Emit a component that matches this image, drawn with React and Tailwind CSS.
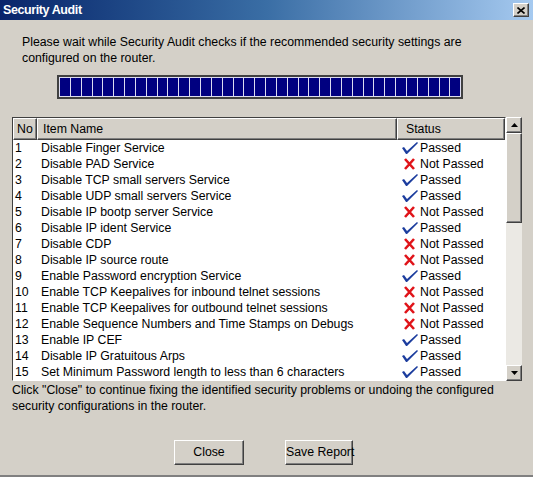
import React from 'react'

const rows = [
  ['Disable Finger Service', true],
  ['Disable PAD Service', false],
  ['Disable TCP small servers Service', true],
  ['Disable UDP small servers Service', true],
  ['Disable IP bootp server Service', false],
  ['Disable IP ident Service', true],
  ['Disable CDP', false],
  ['Disable IP source route', false],
  ['Enable Password encryption Service', true],
  ['Enable TCP Keepalives for inbound telnet sessions', false],
  ['Enable TCP Keepalives for outbound telnet sessions', false],
  ['Enable Sequence Numbers and Time Stamps on Debugs', false],
  ['Enable IP CEF', true],
  ['Disable IP Gratuitous Arps', true],
  ['Set Minimum Password length to less than 6 characters', true],
]

function Check() {
  return (
    <svg width="18" height="14" viewBox="0 0 18 14">
      <path d="M1 7 L3 6 L6 10 L16 1 L17 2 L6 13 L5 13 Z" fill="#1c3d9e" />
    </svg>
  )
}

function Cross() {
  return (
    <svg width="18" height="14" viewBox="0 0 18 14">
      <path d="M4 2 L13 12 M13 2 L4 12" stroke="#e0141a" strokeWidth="2.6" />
    </svg>
  )
}

const raised = 'border border-t-white border-l-white border-r-[#404040] border-b-[#404040] shadow-[inset_-1px_-1px_0_#808080]'

export default function App() {
  const segs = Array.from({ length: 37 })
  return (
    <div className="w-[533px] h-[477px] bg-[#d4d0c8] flex flex-col text-[12.3px] text-black border-b-2 border-b-[#808080]" style={{ fontFamily: '"Liberation Sans", Arial, sans-serif' }}>
      <div className="h-[20px] flex items-center justify-between pl-[3px] pr-[4px] bg-gradient-to-r from-[#0a246a] via-[#3a6ea5] to-[#a6caf0]">
        <span className="text-white font-bold text-[12.5px] tracking-[-0.4px]">Security Audit</span>
        <div className={`w-[16px] h-[14px] bg-[#d4d0c8] flex items-center justify-center ${raised}`}>
          <svg width="8" height="7" viewBox="0 0 8 7">
            <path d="M0.5 0.5 L7.5 6.5 M7.5 0.5 L0.5 6.5" stroke="#000" strokeWidth="1.6" />
          </svg>
        </div>
      </div>

      <p className="mt-[14px] pl-[22px] w-[470px] leading-[16px]">
        Please wait while Security Audit checks if the recommended security settings are configured on the router.
      </p>

      <div className="mt-[9px] ml-[57px] w-[406px] h-[24px] border-2 border-[#404040] bg-[#dcdcf0] flex gap-[1px] p-[1px]">
        {segs.map((_, i) => (
          <div key={i} className="flex-1 h-full bg-[#000080]" />
        ))}
      </div>

      <div className="mt-[18px] ml-[12px] w-[510px] h-[264px] flex">
        <div className="flex-1 border border-t-[#404040] border-l-[#404040] border-r-white border-b-white bg-white flex flex-col">
          <div className="flex h-[22px] bg-[#d4d0c8]">
            <div className={`w-[24px] pl-[3px] flex items-center ${raised}`}>No</div>
            <div className={`w-[360px] pl-[5px] flex items-center ${raised}`}>Item Name</div>
            <div className={`flex-1 pl-[8px] flex items-center ${raised}`}>Status</div>
          </div>
          {rows.map(([name, ok], i) => (
            <div key={i} className="flex h-[16px] items-center">
              <div className="w-[24px] pl-[2px]">{i + 1}</div>
              <div className="w-[360px] pl-[4px] whitespace-nowrap">{name}</div>
              <div className="flex-1 pl-[4px] flex items-center gap-[1px]">
                {ok ? <Check /> : <Cross />}
                <span>{ok ? 'Passed' : 'Not Passed'}</span>
              </div>
            </div>
          ))}
        </div>
        <div className="w-[16px] flex flex-col bg-[#ebe9e4]">
          <div className={`h-[16px] bg-[#d4d0c8] flex items-center justify-center ${raised}`}>
            <svg width="7" height="4" viewBox="0 0 7 4"><path d="M3.5 0 L7 4 L0 4 Z" fill="#000" /></svg>
          </div>
          <div className={`h-[90px] bg-[#d4d0c8] ${raised}`} />
          <div className="flex-1" />
          <div className={`h-[16px] bg-[#d4d0c8] flex items-center justify-center ${raised}`}>
            <svg width="7" height="4" viewBox="0 0 7 4"><path d="M0 0 L7 0 L3.5 4 Z" fill="#000" /></svg>
          </div>
        </div>
      </div>

      <p className="mt-[1px] pl-[12px] pr-[20px] leading-[16px]">
        Click  "Close" to continue fixing the identified security problems or undoing the configured security configurations in the router.
      </p>

      <div className="mt-[26px] flex pl-[174px] gap-[41px]">
        <button className={`w-[70px] h-[25px] bg-[#d4d0c8] whitespace-nowrap ${raised}`}>Close</button>
        <button className={`w-[68px] h-[25px] bg-[#d4d0c8] whitespace-nowrap px-0 ${raised}`}>Save Report</button>
      </div>
    </div>
  )
}
